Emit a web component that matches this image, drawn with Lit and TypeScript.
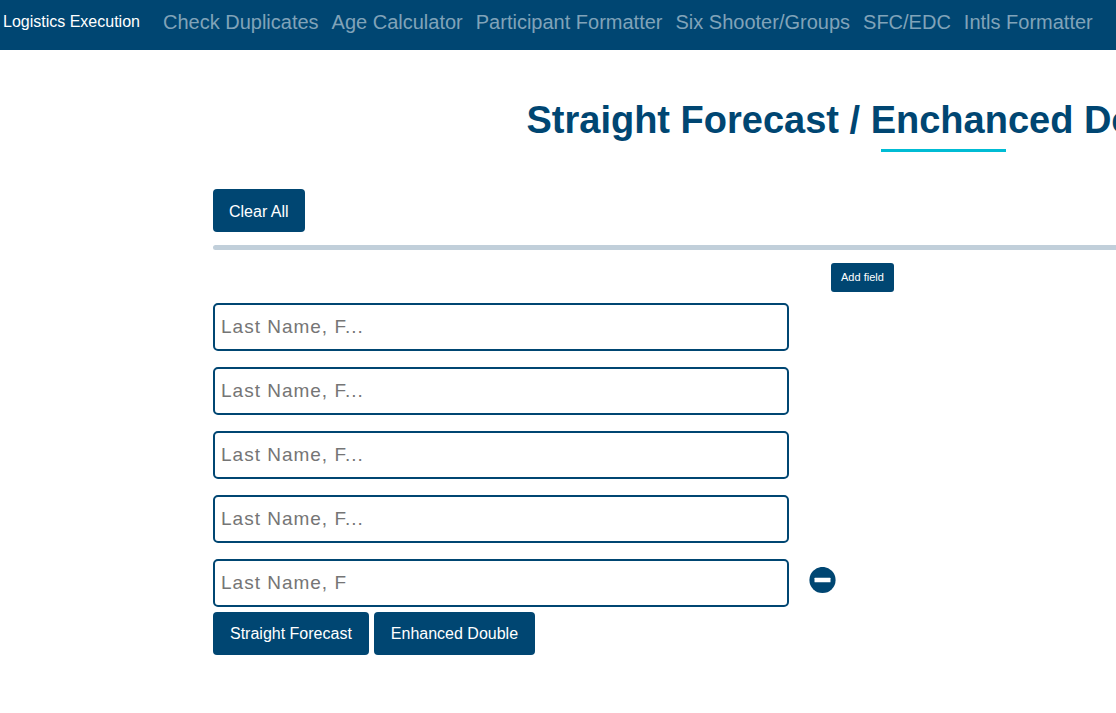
import { LitElement, html, css } from "lit";
import { customElement, state } from "lit/decorators.js";

const LINKS = [
  "Check Duplicates",
  "Age Calculator",
  "Participant Formatter",
  "Six Shooter/Groups",
  "SFC/EDC",
  "Intls Formatter",
];

@customElement("app-root")
export class AppRoot extends LitElement {
  @state() private names: string[] = ["", "", "", "", ""];

  static styles = css`
    :host {
      display: block;
      overflow-x: hidden;
      min-height: 100vh;
      background: #fff;
      color: #004672;
      font-family: "Liberation Sans", Arial, sans-serif;
      font-size: 16px;
    }
    * {
      box-sizing: border-box;
    }
    .nav {
      display: flex;
      align-items: center;
      height: 50px;
      padding: 0 3px 6px;
      background: #004672;
      white-space: nowrap;
    }
    .brand {
      color: #fff;
      line-height: 20px;
      text-decoration: none;
      margin-right: 23px;
    }
    .links {
      display: flex;
      gap: 13px;
      margin: 0;
      padding: 0;
      list-style: none;
    }
    .link {
      color: #80a3b9;
      font-size: 20px;
      line-height: 24px;
      text-decoration: none;
    }
    .page {
      min-width: 1461px;
      margin: 0 213px;
      padding: 48px 0;
    }
    .title {
      display: flex;
      flex-direction: column;
      align-items: center;
      gap: 7px;
      margin: 0 0 37px;
      font-size: 38px;
      line-height: 44px;
      white-space: nowrap;
    }
    .title::after {
      content: "";
      width: 125px;
      height: 3px;
      background: #00bcd4;
    }
    .btn {
      height: 43px;
      padding: 2px 16px 0;
      border: 0;
      border-radius: 4px;
      background: #004672;
      color: #fff;
      font: inherit;
      cursor: pointer;
    }
    .btn.small {
      display: block;
      height: 29px;
      padding: 0 10px 2px;
      border-radius: 3px;
      font-size: 11px;
      font-weight: 500;
      margin: 0 0 11px 618px;
    }
    .rule {
      height: 5px;
      margin: 13px 0;
      border: 0;
      border-radius: 3px;
      background: #c1cfda;
    }
    .fields {
      display: grid;
      gap: 16px;
    }
    .row {
      display: flex;
      align-items: flex-start;
      gap: 20px;
    }
    .field {
      width: 576px;
      height: 48px;
      padding: 0 6px;
      border: 2px solid #004672;
      border-radius: 5px;
      background: #fff;
      color: #004672;
      font: inherit;
      font-size: 19px;
      letter-spacing: 1px;
      outline: none;
    }
    .field::placeholder {
      color: #757575;
    }
    .remove {
      display: flex;
      padding: 8px 0 0;
      border: 0;
      background: none;
      color: #004672;
      cursor: pointer;
    }
    .actions {
      display: flex;
      gap: 5px;
      margin-top: 5px;
    }
    .actions .btn {
      padding: 0 17px;
    }
  `;

  private add() {
    this.names = [...this.names, ""];
  }

  private remove() {
    this.names = this.names.slice(0, -1);
  }

  private clear() {
    this.names = this.names.map(() => "");
  }

  private edit(index: number, event: Event) {
    const value = (event.target as HTMLInputElement).value;
    this.names = this.names.map((n, i) => (i === index ? value : n));
  }

  render() {
    const last = this.names.length - 1;
    return html`
      <nav class="nav">
        <a class="brand" href="#">Logistics Execution</a>
        <ul class="links">
          ${LINKS.map((l) => html`<li><a class="link" href="#">${l}</a></li>`)}
        </ul>
      </nav>
      <main class="page">
        <h1 class="title">Straight Forecast / Enchanced Double Chance</h1>
        <button class="btn" type="button" @click=${this.clear}>Clear All</button>
        <hr class="rule" />
        <button class="btn small" type="button" @click=${this.add}>Add field</button>
        <div class="fields">
          ${this.names.map(
            (name, i) => html`<div class="row">
              <input
                class="field"
                type="text"
                aria-label="Last Name, F"
                placeholder=${i === last ? "Last Name, F" : "Last Name, F..."}
                .value=${name}
                @input=${(e: Event) => this.edit(i, e)}
              />
              ${i === last && i > 0
                ? html`<button class="remove" type="button" aria-label="Remove field" @click=${this.remove}>
                    <svg width="27" height="27" viewBox="0 0 27 27" aria-hidden="true">
                      <circle cx="13.5" cy="13" r="13.1" fill="currentColor" />
                      <rect x="5.5" y="10.8" width="16" height="4.4" rx=".5" fill="#fff" />
                    </svg>
                  </button>`
                : ""}
            </div>`
          )}
        </div>
        <div class="actions">
          <button class="btn" type="button">Straight Forecast</button>
          <button class="btn" type="button">Enhanced Double</button>
        </div>
      </main>
    `;
  }
}
